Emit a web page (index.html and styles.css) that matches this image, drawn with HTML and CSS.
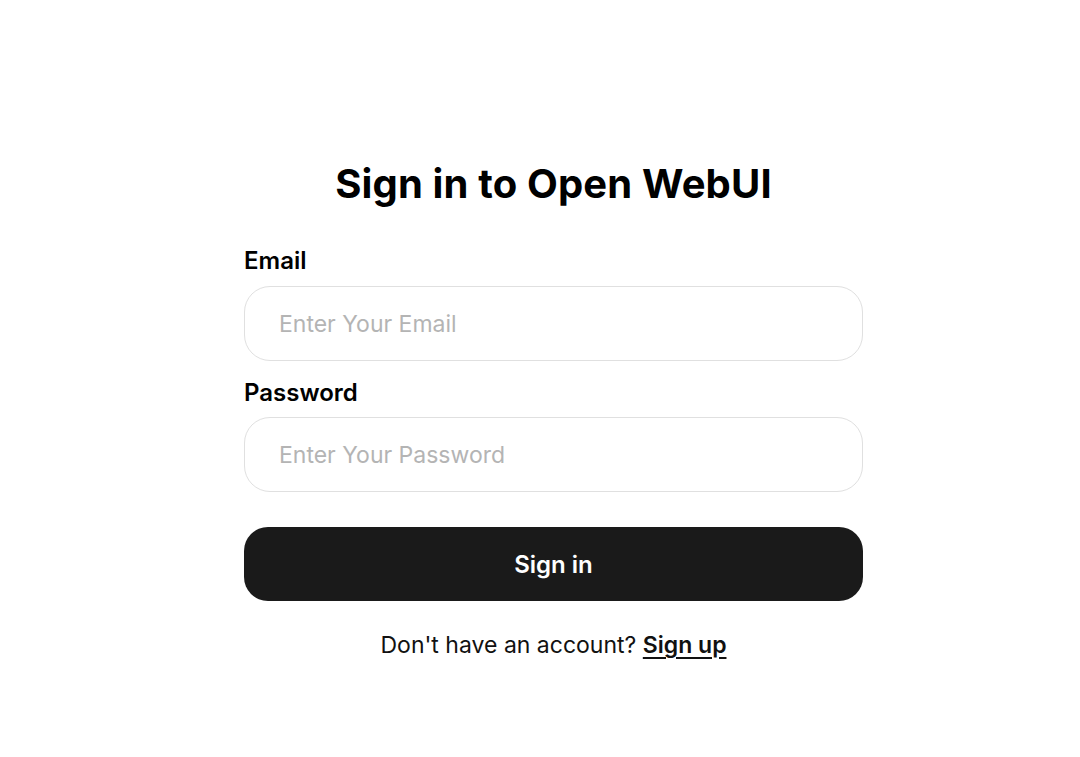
FILE: index.html
```html
<!DOCTYPE html>
<html lang="en">
<head>
<meta charset="utf-8">
<title>Sign in to Open WebUI</title>
<link rel="stylesheet" href="styles.css">
</head>
<body>
<main class="page">
  <form class="card">
    <h1 class="title">Sign in to Open WebUI</h1>
    <div class="field">
      <label class="label" for="email">Email</label>
      <input class="input" id="email" type="email" placeholder="Enter Your Email">
    </div>
    <div class="field field-2">
      <label class="label" for="password">Password</label>
      <input class="input" id="password" type="password" placeholder="Enter Your Password">
    </div>
    <button class="btn" type="button">Sign in</button>
    <p class="footer">Don't have an account? <a class="link" href="#">Sign up</a></p>
  </form>
</main>
</body>
</html>
```
FILE: styles.css
```css
* { box-sizing: border-box; }
html, body { margin: 0; padding: 0; background: #fff; }
body {
  font-family: Inter, "Noto Sans", "Liberation Sans", sans-serif;
  color: #000;
  width: 1080px;
  height: 757px;
  overflow: hidden;
}
.page {
  display: flex;
  justify-content: flex-start;
  padding-left: 244px;
  padding-top: 160px;
}
.card {
  width: 619px;
  display: flex;
  flex-direction: column;
}
.title {
  margin: 0;
  font-size: 40px;
  line-height: 48px;
  font-weight: 700;
  text-align: center;
  letter-spacing: 0.15px;
}
.field {
  display: flex;
  flex-direction: column;
  gap: 9px;
  margin-top: 37px;
}
.field-2 { margin-top: 16px; gap: 8px; }
.label {
  font-size: 24px;
  line-height: 32px;
  font-weight: 600;
}
.input {
  height: 75px;
  border: 1.5px solid #e0e0e0;
  border-radius: 26px;
  padding: 0 34px;
  font-family: inherit;
  font-size: 23px;
  color: #000;
  background: #fff;
  outline: none;
}
.input::placeholder { color: #b4b4b4; }
.btn {
  margin-top: 35px;
  height: 74px;
  border: none;
  border-radius: 24px;
  background: #1a1a1a;
  color: #fff;
  font-family: inherit;
  font-size: 24px;
  font-weight: 600;
}
.footer {
  margin: 28px 0 0;
  font-size: 23px;
  line-height: 32px;
  text-align: center;
  color: #111;
}
.link {
  color: #111;
  font-weight: 600;
  text-decoration: underline;
  text-underline-offset: 4px;
  text-decoration-thickness: 2px;
}
```
